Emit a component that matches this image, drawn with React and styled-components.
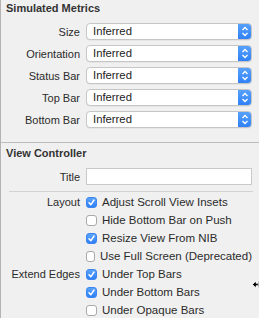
import React from "react";
import styled, { createGlobalStyle, css } from "styled-components";

const GlobalStyle = createGlobalStyle`
  html, body {
    margin: 0;
    padding: 0;
    background: #f0f0f0;
  }
  body {
    font-family: "Liberation Sans", Arial, sans-serif;
    font-size: 11px;
    color: #2b2b2b;
  }
`;

const Panel = styled.div`
  position: relative;
  width: 259px;
  height: 318px;
  box-sizing: border-box;
  border-left: 1px solid #b4b4b4;
  background: #f0f0f0;
  overflow: hidden;
`;

const Section = styled.section`
  display: flex;
  flex-direction: column;
  padding-bottom: ${({ pb }) => pb || 0}px;
`;

const Heading = styled.h3`
  margin: ${({ mt }) => mt || 0}px 0 7px;
  padding-left: 5px;
  height: 16px;
  line-height: 16px;
  font-size: 11px;
  font-weight: 700;
  color: #333;
`;

const Rows = styled.div`
  display: flex;
  flex-direction: column;
  gap: ${({ gap }) => gap || 0}px;
`;

const Row = styled.div`
  display: grid;
  grid-template-columns: 79px 166px;
  column-gap: 6px;
  align-items: center;
  height: ${({ h }) => h || 17}px;
`;

const Label = styled.span`
  text-align: right;
  white-space: nowrap;
  color: #2b2b2b;
`;

const Select = styled.div`
  display: flex;
  height: 17px;
  box-sizing: border-box;
  border: 1px solid #c6c6c6;
  border-radius: 4px;
  background: #fff;
  box-shadow: 0 0.5px 0.5px rgba(0, 0, 0, 0.08);
  overflow: hidden;
`;

const SelectValue = styled.span`
  flex: 1;
  padding-left: 6px;
  line-height: 15px;
  font-size: 11.3px;
  color: #222;
`;

const Stepper = styled.span`
  width: 14px;
  display: flex;
  align-items: center;
  justify-content: center;
  background: linear-gradient(#5aa3fb, #2d7ff7);
  margin: -1px -1px -1px 0;
`;

const TextField = styled.div`
  height: 17px;
  box-sizing: border-box;
  border: 1px solid #c9c9c9;
  background: #fff;
`;

const Divider = styled.hr`
  margin: ${({ inset }) => (inset ? "6px 6px 1px 8px" : "0")};
  border: 0;
  height: 1px;
  background: ${({ inset }) => (inset ? "#d2d2d2" : "#bdbdbd")};
`;

const Check = styled.label`
  display: flex;
  align-items: center;
  gap: 5px;
  white-space: nowrap;
  font-size: 11.5px;
`;

const Box = styled.span`
  width: 11px;
  height: 11px;
  box-sizing: border-box;
  border-radius: 3px;
  display: flex;
  align-items: center;
  justify-content: center;
  ${({ checked }) =>
    checked
      ? css`
          background: linear-gradient(#5aa3fb, #2f80f7);
          border: 1px solid #3a85f0;
        `
      : css`
          background: #fff;
          border: 1px solid #a9a9a9;
        `}
`;

const Cursor = styled.svg`
  position: absolute;
  left: 251px;
  top: 280px;
`;

const Chevrons = () => (
  <svg width="8" height="11" viewBox="0 0 8 11">
    <path
      d="M1.5 4 L4 1.5 L6.5 4 M1.5 7 L4 9.5 L6.5 7"
      fill="none"
      stroke="#fff"
      strokeWidth="1.3"
    />
  </svg>
);

const Tick = () => (
  <svg width="9" height="9" viewBox="0 0 9 9">
    <path
      d="M2 4.8 L3.8 6.8 L7 2"
      fill="none"
      stroke="#fff"
      strokeWidth="1.5"
      strokeLinecap="round"
      strokeLinejoin="round"
    />
  </svg>
);

const metrics = ["Size", "Orientation", "Status Bar", "Top Bar", "Bottom Bar"];

const options = [
  ["Layout", "Adjust Scroll View Insets", true],
  ["", "Hide Bottom Bar on Push", false],
  ["", "Resize View From NIB", true],
  ["", "Use Full Screen (Deprecated)", false],
  ["Extend Edges", "Under Top Bars", true],
  ["", "Under Bottom Bars", true],
  ["", "Under Opaque Bars", false]
];

const App = () => (
  <>
    <GlobalStyle />
    <Panel>
      <Section pb={14}>
        <Heading>Simulated Metrics</Heading>
        <Rows gap={5}>
          {metrics.map(name => (
            <Row key={name}>
              <Label>{name}</Label>
              <Select>
                <SelectValue>Inferred</SelectValue>
                <Stepper>
                  <Chevrons />
                </Stepper>
              </Select>
            </Row>
          ))}
        </Rows>
      </Section>
      <Divider />
      <Section>
        <Heading mt={2}>View Controller</Heading>
        <Row>
          <Label>Title</Label>
          <TextField />
        </Row>
        <Divider inset />
        <Rows>
          {options.map(([label, text, checked]) => (
            <Row key={text} h={18}>
              <Label>{label}</Label>
              <Check>
                <Box checked={checked}>{checked && <Tick />}</Box>
                {text}
              </Check>
            </Row>
          ))}
        </Rows>
      </Section>
      <Cursor width="9" height="9" viewBox="0 0 9 9">
        <path
          d="M0.5 4.5 L4 1 L4 3.3 L6.3 3.3 L6.3 5.7 L4 5.7 L4 8 Z"
          fill="#000"
          stroke="#fff"
          strokeWidth="0.7"
        />
        <rect x="6.8" y="1.5" width="1.6" height="6" fill="#000" />
      </Cursor>
    </Panel>
  </>
);

export default App;
